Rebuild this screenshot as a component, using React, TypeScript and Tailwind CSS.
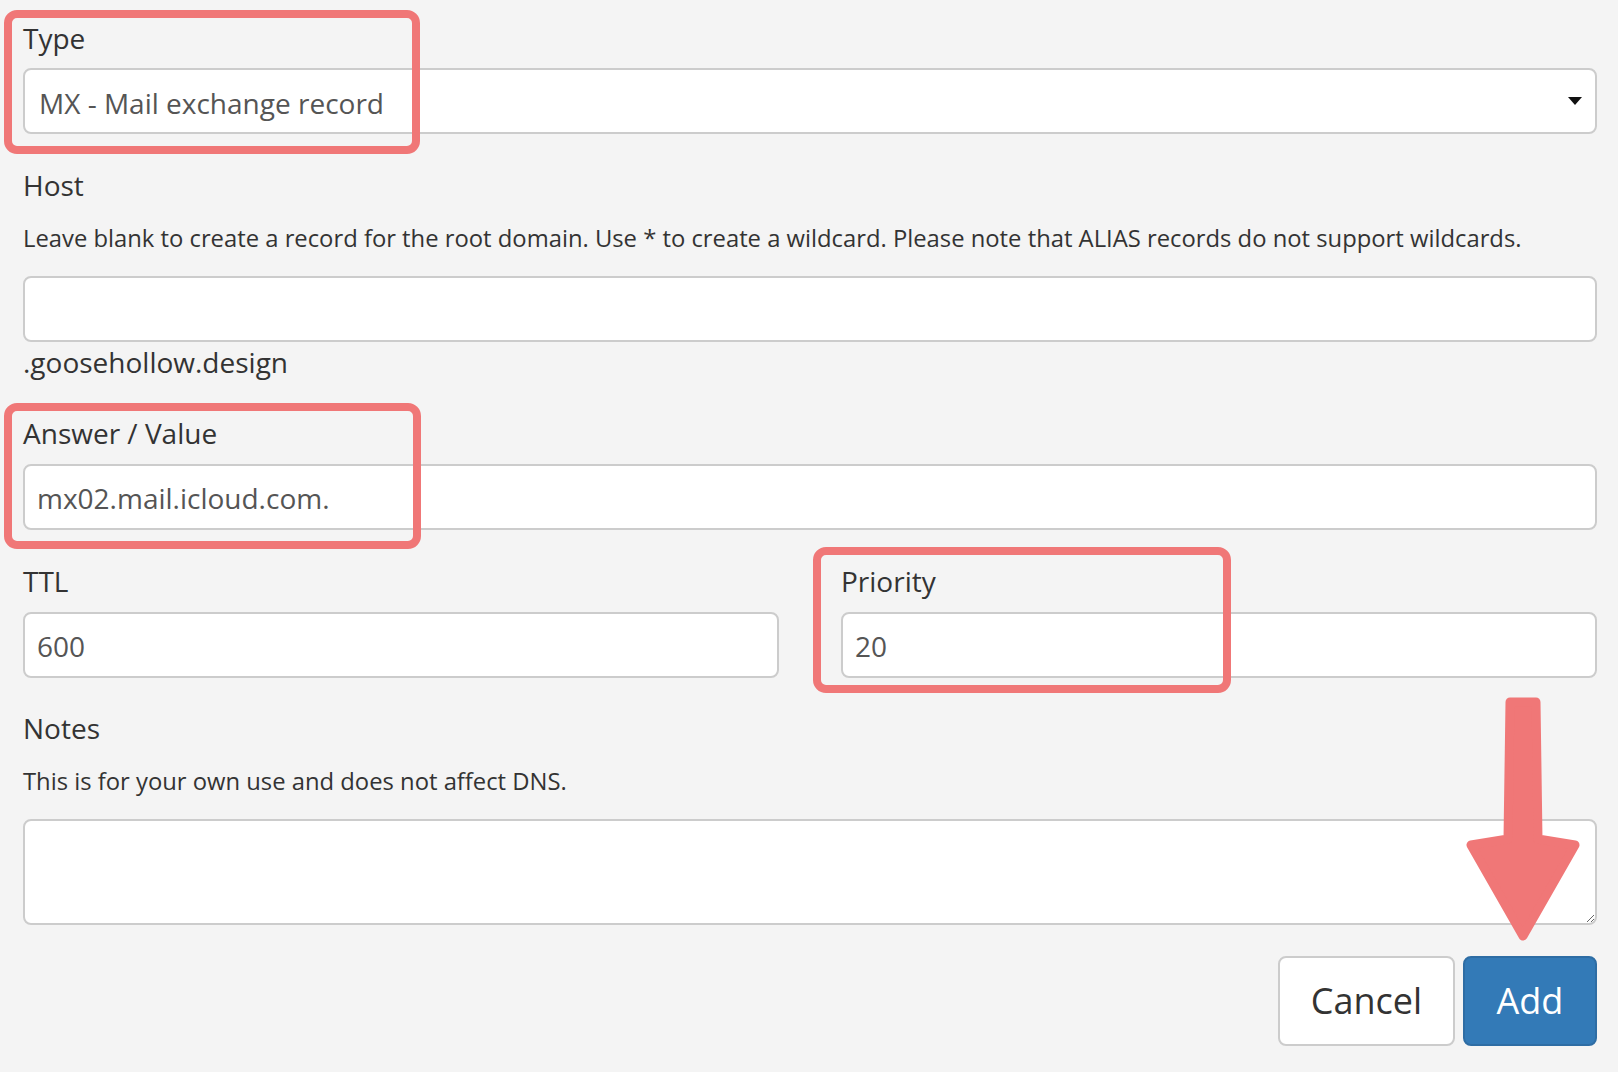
import React from "react";

function Label({ children }: { children: React.ReactNode }) {
  return <div className="text-[28px] leading-[40px] text-[#333]">{children}</div>;
}

function Help({ children }: { children: React.ReactNode }) {
  return <div className="mt-[17px] mb-[22px] text-[23.8px] leading-[32px] text-[#333]">{children}</div>;
}

function Input({ value }: { value?: string }) {
  return (
    <div className="flex h-[66px] items-center rounded-[8px] border-2 border-[#ccc] bg-white pl-[12px] pt-[2px] text-[28px] text-[#555]">
      {value}
    </div>
  );
}

export default function App() {
  return (
    <div className="relative min-h-screen w-full overflow-hidden bg-[#f4f4f4] font-['Open_Sans',sans-serif] text-[#333]">
      <div className="pl-[23px] pr-[21px] pt-[18px] pb-[24px]">
        {/* Type */}
        <div>
          <div className="mb-[10px]">
            <Label>Type</Label>
          </div>
          <div className="relative flex h-[66px] items-center rounded-[8px] border-2 border-[#ccc] bg-white pl-[14px] pt-[3px] text-[28px] text-[#555]">
            MX - Mail exchange record
            <svg className="absolute right-[13px] top-[27px]" width="14" height="8" viewBox="0 0 14 8">
              <polygon points="0,0 14,0 7,8" fill="#111" />
            </svg>
          </div>
        </div>

        {/* Host */}
        <div className="mt-[31px]">
          <Label>Host</Label>
          <Help>
            Leave blank to create a record for the root domain. Use * to create a wildcard. Please note that ALIAS records do not support wildcards.
          </Help>
          <Input />
          <div className="text-[28px] leading-[40px] text-[#333]">.goosehollow.design</div>
        </div>

        {/* Answer */}
        <div className="mt-[31px]">
          <div className="mb-[11px]">
            <Label>Answer / Value</Label>
          </div>
          <Input value="mx02.mail.icloud.com." />
        </div>

        {/* TTL / Priority */}
        <div className="mt-[31px] grid grid-cols-2 gap-x-[62px]">
          <div>
            <div className="mb-[11px]">
              <Label>TTL</Label>
            </div>
            <Input value="600" />
          </div>
          <div>
            <div className="mb-[11px]">
              <Label>Priority</Label>
            </div>
            <Input value="20" />
          </div>
        </div>

        {/* Notes */}
        <div className="mt-[30px]">
          <Label>Notes</Label>
          <Help>This is for your own use and does not affect DNS.</Help>
          <textarea
            className="block h-[106px] w-full resize rounded-[8px] border-2 border-[#ccc] bg-white px-[12px] py-[8px] text-[28px] text-[#555] outline-none"
            defaultValue=""
          />
        </div>

        {/* Buttons */}
        <div className="mt-[31px] flex justify-end gap-[8px]">
          <button className="flex h-[90px] w-[177px] items-center justify-center rounded-[8px] border-2 border-[#ccc] bg-white text-[36px] text-[#333]">
            Cancel
          </button>
          <button className="flex h-[90px] w-[134px] items-center justify-center rounded-[8px] border-2 border-[#2e6da4] bg-[#337ab7] text-[36px] text-white">
            Add
          </button>
        </div>
      </div>

      {/* Annotation boxes */}
      <div className="pointer-events-none absolute left-[4px] top-[10px] h-[144px] w-[416px] rounded-[13px] border-[8px] border-[#f07777]" />
      <div className="pointer-events-none absolute left-[4px] top-[403px] h-[146px] w-[417px] rounded-[13px] border-[8px] border-[#f07777]" />
      <div className="pointer-events-none absolute left-[813px] top-[547px] h-[146px] w-[418px] rounded-[13px] border-[8px] border-[#f07777]" />

      {/* Arrow */}
      <svg className="pointer-events-none absolute left-[1460px] top-[690px]" width="130" height="262" viewBox="0 0 130 262">
        <path
          d="M50 12 L76 12 L78 149 L115 155 L63 246 L11 155 L48 149 Z"
          fill="#f07777"
          stroke="#f07777"
          strokeWidth="9"
          strokeLinejoin="round"
        />
      </svg>
    </div>
  );
}
